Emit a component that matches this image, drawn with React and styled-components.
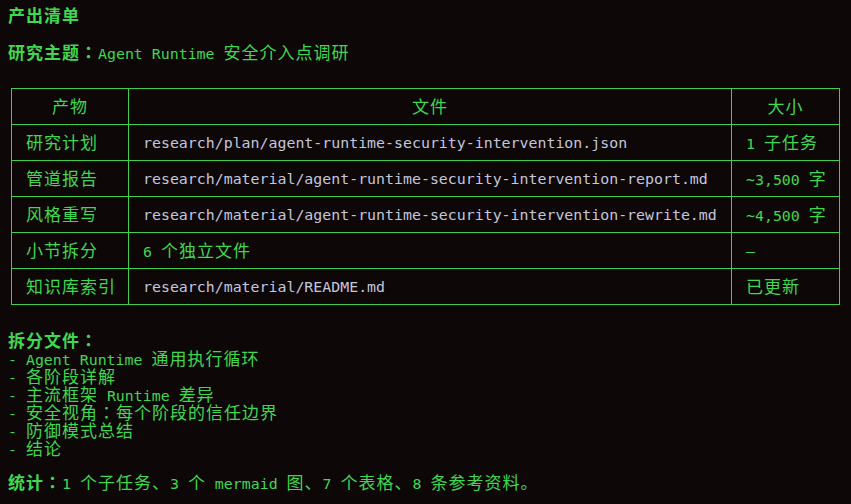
import React from "react";
import styled, { createGlobalStyle } from "styled-components";

const green = "#3fd84f";
const pathGray = "#c4c6dc";
const line = "#3ccf4a";

const GlobalStyle = createGlobalStyle`
  html, body {
    margin: 0;
    background: #0d0707;
  }
  body {
    font-family: "DejaVu Sans Mono", "Liberation Mono", monospace;
    font-size: 14.9px;
    line-height: 18px;
    color: ${green};
  }
`;

const Screen = styled.div`
  min-height: 504px;
  padding: 6px 8px 0;
  box-sizing: border-box;
`;

const Line = styled.div`
  height: 18px;
  white-space: pre;
  margin-top: ${(p) => p.$gap || 0}px;
`;

// CJK runs take two terminal cells (18px); the colon is centred like the terminal draws it
const Han = styled.span`
  font-family: ${(p) => (p.$centered ? '"Noto Sans CJK TC"' : '"Noto Sans CJK SC"')}, sans-serif;
  font-size: 17px;
  letter-spacing: 1px;
  line-height: 18px;
`;

const Strong = styled.span`
  font-weight: bold;
`;

const Table = styled.table`
  margin: 27px 0 0 3px;
  width: 829px;
  border-collapse: collapse;
  table-layout: fixed;
`;

const Head = styled.th`
  height: 35px;
  padding: 0;
  border: 1px solid ${line};
  font-weight: normal;
  text-align: center;
  color: ${green};
`;

const Cell = styled.td`
  height: 35px;
  padding: 0 0 0 14px;
  border: 1px solid ${line};
  white-space: pre;
  color: ${(p) => (p.$path ? pathGray : green)};
`;

const cjk = /([\u2E80-\u9FFF\u3000-\u303F\uFF00-\uFFEF]+)/;

const T = ({ children }) =>
  String(children)
    .split(cjk)
    .flatMap((part, i) =>
      i % 2
        ? part.split(/(：)/).filter(Boolean).map((seg, j) => (
            <Han key={`${i}-${j}`} $centered={seg === "："}>{seg}</Han>
          ))
        : [part]
    );

const rows = [
  ["研究计划", "research/plan/agent-runtime-security-intervention.json", "1 子任务", true],
  ["管道报告", "research/material/agent-runtime-security-intervention-report.md", "~3,500 字", true],
  ["风格重写", "research/material/agent-runtime-security-intervention-rewrite.md", "~4,500 字", true],
  ["小节拆分", "6 个独立文件", "–", false],
  ["知识库索引", "research/material/README.md", "已更新", true],
];

const parts = [
  "Agent Runtime 通用执行循环",
  "各阶段详解",
  "主流框架 Runtime 差异",
  "安全视角：每个阶段的信任边界",
  "防御模式总结",
  "结论",
];

export default function App() {
  return (
    <Screen>
      <GlobalStyle />
      <Line>
        <Strong><T>产出清单</T></Strong>
      </Line>
      <Line $gap={19}>
        <Strong><T>研究主题：</T></Strong>
        <T>Agent Runtime 安全介入点调研</T>
      </Line>
      <Table>
        <colgroup>
          <col style={{ width: 117 }} />
          <col style={{ width: 603 }} />
          <col style={{ width: 108 }} />
        </colgroup>
        <thead>
          <tr>
            <Head><T>产物</T></Head>
            <Head><T>文件</T></Head>
            <Head><T>大小</T></Head>
          </tr>
        </thead>
        <tbody>
          {rows.map(([name, file, size, isPath]) => (
            <tr key={name}>
              <Cell><T>{name}</T></Cell>
              <Cell $path={isPath}><T>{file}</T></Cell>
              <Cell><T>{size}</T></Cell>
            </tr>
          ))}
        </tbody>
      </Table>
      <Line $gap={26}>
        <Strong><T>拆分文件：</T></Strong>
      </Line>
      {parts.map((p) => (
        <Line key={p}>
          - <T>{p}</T>
        </Line>
      ))}
      <Line $gap={16}>
        <Strong><T>统计：</T></Strong>
        <T>1 个子任务、3 个 mermaid 图、7 个表格、8 条参考资料。</T>
      </Line>
    </Screen>
  );
}
